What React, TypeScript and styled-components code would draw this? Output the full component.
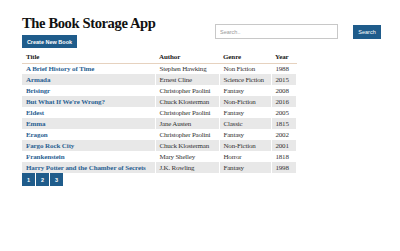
import React from 'react';
import styled, { createGlobalStyle } from 'styled-components';

const GlobalStyle = createGlobalStyle`
  body {
    margin: 0;
    background: #ffffff;
    font-family: "Liberation Serif", "DejaVu Serif", serif;
  }
`;

const Page = styled.div`
  padding: 13px 19px 0 22px;
`;

const Header = styled.div`
  display: flex;
  justify-content: space-between;
  align-items: flex-start;
`;

const Left = styled.div`
  display: flex;
  flex-direction: column;
  align-items: flex-start;
`;

const Title = styled.h1`
  margin: 0;
  font-size: 14.6px;
  line-height: 20px;
  font-weight: bold;
  color: #111;
  letter-spacing: -0.4px;
`;

const BlueButton = styled.button`
  background: #1f5c8b;
  color: #fff;
  border: none;
  font-family: "Liberation Sans", Arial, sans-serif;
  font-weight: bold;
  font-size: 5.5px;
  cursor: pointer;
`;

const CreateBtn = styled(BlueButton)`
  margin-top: 2px;
  width: 55px;
  height: 13px;
  padding: 0;
`;

const SearchForm = styled.div`
  display: flex;
  align-items: center;
  gap: 15px;
  margin-top: 11px;
`;

const SearchInput = styled.input`
  box-sizing: border-box;
  width: 123px;
  height: 15px;
  border: 1px solid #c8c8c8;
  padding: 0 4px;
  font-size: 5.5px;
  font-family: "Liberation Sans", Arial, sans-serif;
  &::placeholder {
    color: #999;
  }
`;

const SearchBtn = styled(BlueButton)`
  width: 28px;
  height: 14px;
  padding: 0;
  font-weight: normal;
`;

const Table = styled.table`
  margin-top: 4px;
  border-collapse: collapse;
  table-layout: fixed;
  width: 274px;
  font-size: 7px;
`;

const Th = styled.th<{ $w: number }>`
  width: ${({ $w }) => $w}px;
  box-sizing: border-box;
  text-align: left;
  font-weight: bold;
  color: #222;
  height: 11px;
  padding: 0 3px 0 4px;
  border-bottom: 1.5px solid #e6d2bf;
  letter-spacing: -0.1px;
`;

const Row = styled.tr<{ $odd: boolean }>`
  height: 11px;
  background: ${({ $odd }) => ($odd ? '#e8e8e8' : '#ffffff')};
`;

const Td = styled.td`
  padding: 0 3px 0 4px;
  color: #333;
  border-right: 1px solid #fff;
  white-space: nowrap;
  overflow: hidden;
  letter-spacing: -0.2px;
`;

const LinkCell = styled(Td)`
  color: #2a6192;
  font-weight: bold;
  letter-spacing: -0.1px;
`;

const Pager = styled.div`
  display: flex;
  gap: 1px;
`;

const PageBtn = styled(BlueButton)`
  width: 13px;
  height: 13px;
  padding: 0;
`;

const books = [
  ['A Brief History of Time', 'Stephen Hawking', 'Non Fiction', '1988'],
  ['Armada', 'Ernest Cline', 'Science Fiction', '2015'],
  ['Brisingr', 'Christopher Paolini', 'Fantasy', '2008'],
  ["But What If We're Wrong?", 'Chuck Klosterman', 'Non-Fiction', '2016'],
  ['Eldest', 'Christopher Paolini', 'Fantasy', '2005'],
  ['Emma', 'Jane Austen', 'Classic', '1815'],
  ['Eragon', 'Christopher Paolini', 'Fantasy', '2002'],
  ['Fargo Rock City', 'Chuck Klosterman', 'Non-Fiction', '2001'],
  ['Frankenstein', 'Mary Shelley', 'Horror', '1818'],
  ['Harry Potter and the Chamber of Secrets', 'J.K. Rowling', 'Fantasy', '1998'],
];

export default function App() {
  return (
    <Page>
      <GlobalStyle />
      <Header>
        <Left>
          <Title>The Book Storage App</Title>
          <CreateBtn>Create New Book</CreateBtn>
        </Left>
        <SearchForm>
          <SearchInput placeholder="Search.." />
          <SearchBtn>Search</SearchBtn>
        </SearchForm>
      </Header>
      <Table>
        <thead>
          <tr>
            <Th $w={133}>Title</Th>
            <Th $w={64}>Author</Th>
            <Th $w={52}>Genre</Th>
            <Th $w={25}>Year</Th>
          </tr>
        </thead>
        <tbody>
          {books.map((b, i) => (
            <Row key={b[0]} $odd={i % 2 === 1}>
              <LinkCell>{b[0]}</LinkCell>
              <Td>{b[1]}</Td>
              <Td>{b[2]}</Td>
              <Td>{b[3]}</Td>
            </Row>
          ))}
        </tbody>
      </Table>
      <Pager>
        <PageBtn>1</PageBtn>
        <PageBtn>2</PageBtn>
        <PageBtn>3</PageBtn>
      </Pager>
    </Page>
  );
}
